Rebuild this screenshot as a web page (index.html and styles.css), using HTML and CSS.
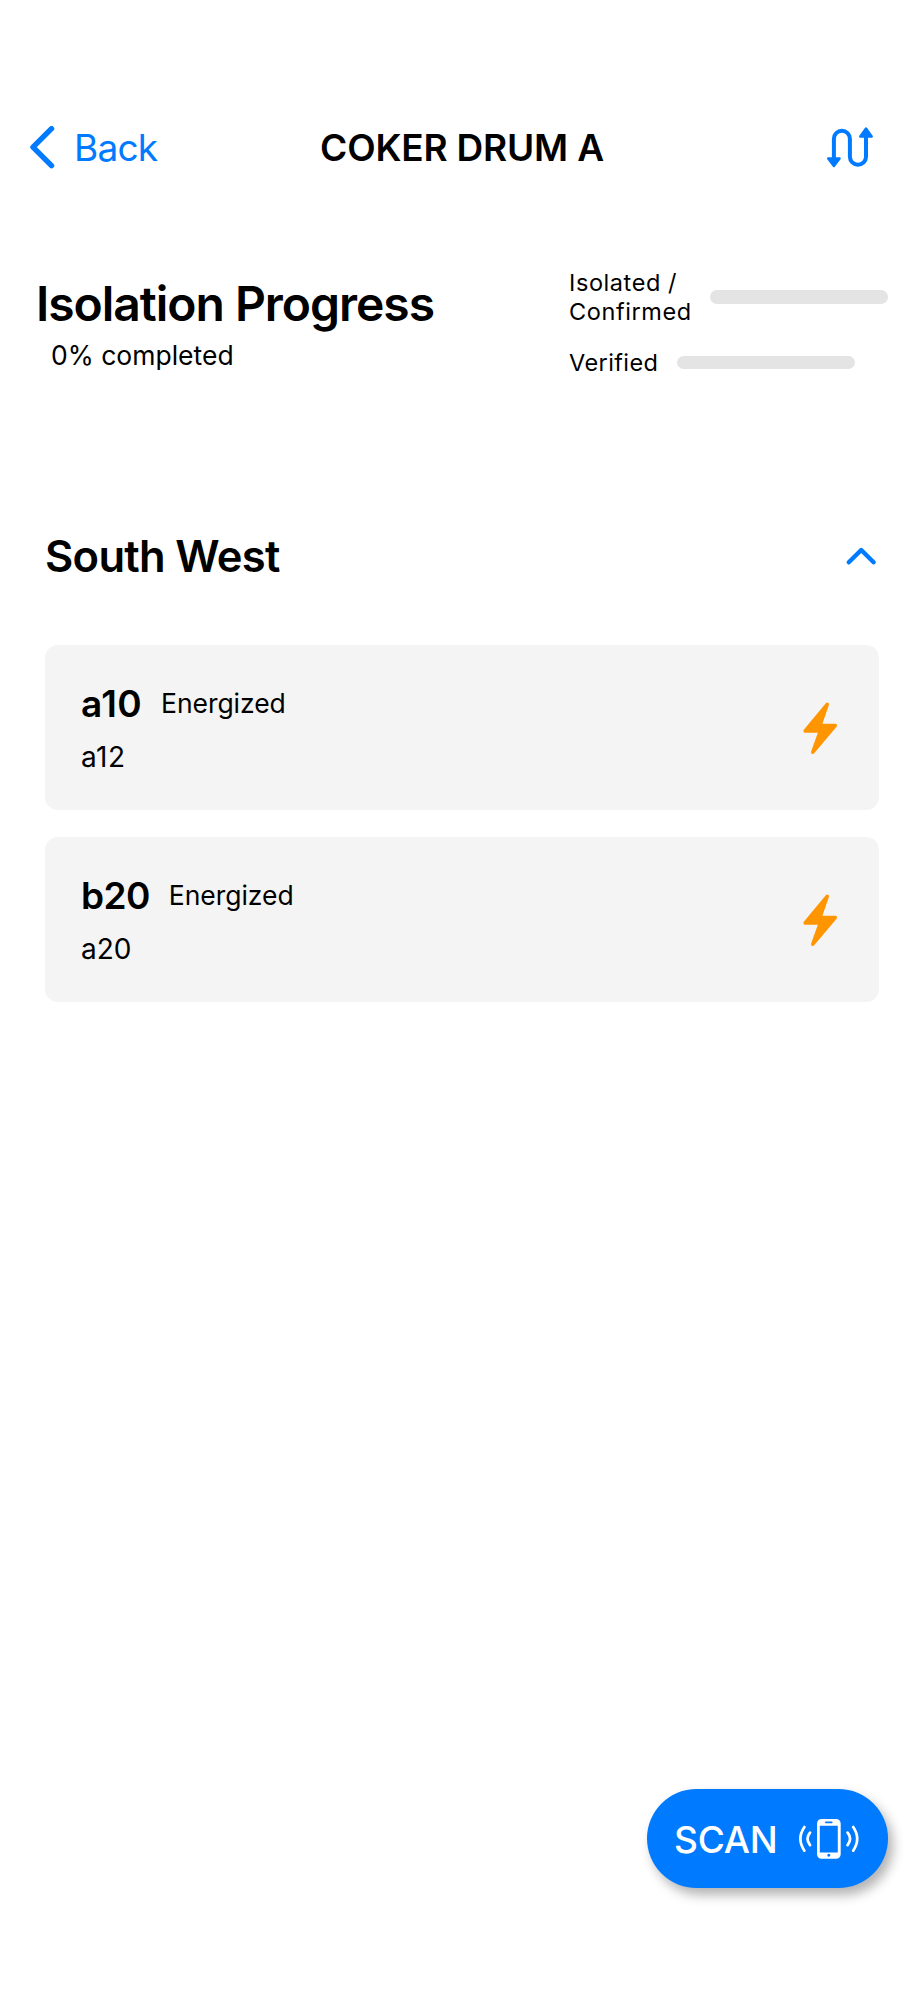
FILE: index.html
```html
<!DOCTYPE html>
<html lang="en">
<head>
<meta charset="utf-8">
<title>Coker Drum A</title>
<link rel="stylesheet" href="styles.css">
</head>
<body>
<div class="screen">
  <header class="navbar">
    <a class="back">
      <svg class="back-icon" width="26" height="44" viewBox="0 0 26 44"><path d="M22.500 2.700 4 21.200 22.500 39.700"/></svg>
      <span>Back</span>
    </a>
    <h1 class="nav-title">COKER DRUM A</h1>
    <svg class="route-icon" width="48" height="44" viewBox="0 0 48 44">
      <path class="route-line" d="M7.900 33V12.700a8 8 0 0 1 16 0V30.700a8.050 8 0 0 0 16.100 0V10"/>
      <path class="route-head" d="M2.200 32.500H13.600L7.900 40ZM34.300 10.500H45.700L40 2.500Z"/>
    </svg>
  </header>

  <section class="progress">
    <div class="summary">
      <h2 class="progress-title">Isolation Progress</h2>
      <p class="progress-value">0% completed</p>
    </div>
    <div class="meters">
      <div class="meter"><span class="meter-label">Isolated /<br>Confirmed</span><span class="track"></span></div>
      <div class="meter"><span class="meter-label verified">Verified</span><span class="track"></span></div>
    </div>
  </section>

  <section class="group">
    <div class="group-head">
      <h2 class="group-title">South West</h2>
      <svg class="collapse-icon" width="32" height="20" viewBox="0 0 32 20"><path d="M3.800 16.300 16.200 4 28.600 16.300"/></svg>
    </div>
    <div class="cards">
      <article class="card">
        <div class="card-text">
          <div class="card-row"><h3 class="tag tag-a">a10</h3><span class="state">Energized</span></div>
          <p class="point">a12</p>
        </div>
        <svg class="bolt" width="36" height="54" viewBox="0 0 36 54"><path d="M25.200 3.400 3.200 30H18.400L10.800 51.200 33.200 24.500H17.900Z"/></svg>
      </article>
      <article class="card">
        <div class="card-text">
          <div class="card-row"><h3 class="tag tag-b">b20</h3><span class="state">Energized</span></div>
          <p class="point point-b">a20</p>
        </div>
        <svg class="bolt" width="36" height="54" viewBox="0 0 36 54"><path d="M25.200 3.400 3.200 30H18.400L10.800 51.200 33.200 24.500H17.900Z"/></svg>
      </article>
    </div>
  </section>

  <button class="scan">
    <span class="scan-label">SCAN</span>
    <svg class="scan-icon" width="62" height="42" viewBox="0 0 62 42">
      <path class="phone" fill-rule="evenodd" d="M23.500 1H38.200a4.500 4.500 0 0 1 4.500 4.500V36.200a4.500 4.500 0 0 1-4.500 4.500H23.500a4.500 4.500 0 0 1-4.500-4.500V5.500A4.500 4.500 0 0 1 23.500 1ZM21.800 7.700V34.500H39.800V7.700ZM27.800 3.600a.8.8 0 0 0 0 1.600H33.800a.8.8 0 0 0 0-1.600ZM30.800 35.700a1.500 1.500 0 1 0 .01 0Z"/>
      <path class="wave" d="M6.400 9Q-1.600 20.700 6.400 32.700M12 14.600Q7 20.700 12 27.100M55.200 9Q63.200 20.700 55.200 32.700M49.600 14.600Q54.600 20.700 49.600 27.100"/>
    </svg>
  </button>
</div>
</body>
</html>
```
FILE: styles.css
```css
* { box-sizing: border-box; }

body {
  margin: 0;
  background: #fff;
  color: #000;
  font-family: Inter, "Liberation Sans", sans-serif;
}

h1, h2, h3, p { margin: 0; font-weight: 400; }
svg { display: block; flex: none; fill: none; stroke-linecap: round; stroke-linejoin: round; }

.screen {
  display: flex;
  flex-direction: column;
  width: 924px;
  height: 2000px;
  overflow: hidden;
}

.navbar {
  display: grid;
  grid-template-columns: 1fr auto 1fr;
  align-items: center;
  height: 104px;
  margin-top: 96px;
  padding: 0 50px 0 29px;
}
.back {
  display: flex;
  align-items: center;
  gap: 19px;
  color: #007aff;
  font-size: 37px;
  line-height: 44px;
  letter-spacing: -0.75px;
}
.back-icon { stroke: #007aff; stroke-width: 5.4; }
.nav-title {
  font-size: 37px;
  line-height: 44px;
  font-weight: 600;
  letter-spacing: -0.18px;
  margin-left: 21px;
}
.route-icon { justify-self: end; }
.route-line { stroke: #007aff; stroke-width: 4; stroke-linecap: butt; }
.route-head { fill: #007aff; stroke: #007aff; stroke-width: 2.4; }

.progress {
  display: flex;
  justify-content: space-between;
  padding: 68px 36px 0;
}
.summary { padding-top: 6px; }
.progress-title {
  font-size: 48px;
  line-height: 59px;
  font-weight: 600;
  letter-spacing: -1.03px;
}
.progress-value {
  margin: 6px 0 0 15px;
  font-size: 26.5px;
  line-height: 32px;
  letter-spacing: 0;
}
.meters {
  display: flex;
  flex-direction: column;
  gap: 22px;
  width: 319px;
}
.meter { display: flex; align-items: center; gap: 18.5px; }
.meter-label { font-size: 23.5px; line-height: 29px; letter-spacing: 0.58px; }
.verified { letter-spacing: 0.4px; }
.track { width: 178.5px; height: 13.5px; border-radius: 7px; background: #e4e4e4; }

.group { margin-top: 153px; padding: 0 45px; }
.group-head {
  display: flex;
  align-items: center;
  justify-content: space-between;
  padding-right: 2px;
}
.group-title {
  font-size: 43.5px;
  line-height: 52px;
  font-weight: 600;
  letter-spacing: -0.7px;
}
.collapse-icon { stroke: #007aff; stroke-width: 4.4; }

.cards { display: flex; flex-direction: column; gap: 27px; margin-top: 63px; }
.card {
  display: flex;
  align-items: center;
  justify-content: space-between;
  height: 165px;
  padding: 0 41px 0 36px;
  border-radius: 13px;
  background: #f4f4f4;
}
.card-row { display: flex; align-items: center; gap: 19px; }
.tag { font-size: 37px; line-height: 44px; font-weight: 600; }
.tag-a { letter-spacing: 0.4px; }
.tag-b { letter-spacing: -0.57px; }
.state { padding-bottom: 2px; font-size: 26.5px; line-height: 32px; letter-spacing: -0.05px; }
.point { margin-top: 14px; font-size: 28px; line-height: 34px; letter-spacing: 0.5px; }
.point-b { letter-spacing: 0; }
.bolt { fill: #ff9500; stroke: #ff9500; stroke-width: 3.6; }

.scan {
  display: flex;
  align-items: center;
  justify-content: space-between;
  align-self: flex-end;
  width: 241px;
  height: 99px;
  margin: auto 36px 112px 0;
  padding: 0 28px 0 27px;
  border: 0;
  border-radius: 50px;
  background: #007aff;
  color: #fff;
  font-family: inherit;
  box-shadow: 5px 7px 12px rgba(0, 0, 0, 0.3);
}
.scan-label {
  padding-top: 2px;
  font-size: 37px;
  line-height: 44px;
  font-weight: 550;
  letter-spacing: -0.2px;
}
.phone { fill: #fff; }
.wave { stroke: #fff; stroke-width: 2.7; }
```
